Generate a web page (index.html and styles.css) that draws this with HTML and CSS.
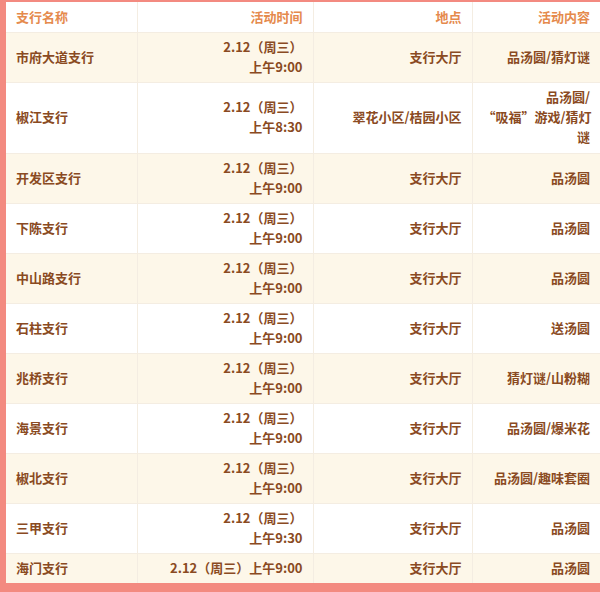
FILE: index.html
```
<!DOCTYPE html>
<html lang="zh">
<head>
<meta charset="utf-8">
<link rel="stylesheet" href="styles.css">
</head>
<body>
<div class="frame">
<table class="sched">
<colgroup><col class="c1"><col class="c2"><col class="c3"><col class="c4"></colgroup>
<thead>
<tr><th class="l">支行名称</th><th>活动时间</th><th>地点</th><th>活动内容</th></tr>
</thead>
<tbody>
<tr class="alt"><td class="l">市府大道支行</td><td>2.12（周三）<br>上午9:00</td><td>支行大厅</td><td>品汤圆/猜灯谜</td></tr>
<tr class="tall"><td class="l">椒江支行</td><td>2.12（周三）<br>上午8:30</td><td>翠花小区/桔园小区</td><td>品汤圆/<br>“吸福”游戏/猜灯<br>谜</td></tr>
<tr class="alt"><td class="l">开发区支行</td><td>2.12（周三）<br>上午9:00</td><td>支行大厅</td><td>品汤圆</td></tr>
<tr><td class="l">下陈支行</td><td>2.12（周三）<br>上午9:00</td><td>支行大厅</td><td>品汤圆</td></tr>
<tr class="alt"><td class="l">中山路支行</td><td>2.12（周三）<br>上午9:00</td><td>支行大厅</td><td>品汤圆</td></tr>
<tr><td class="l">石柱支行</td><td>2.12（周三）<br>上午9:00</td><td>支行大厅</td><td>送汤圆</td></tr>
<tr class="alt"><td class="l">兆桥支行</td><td>2.12（周三）<br>上午9:00</td><td>支行大厅</td><td>猜灯谜/山粉糊</td></tr>
<tr><td class="l">海景支行</td><td>2.12（周三）<br>上午9:00</td><td>支行大厅</td><td>品汤圆/爆米花</td></tr>
<tr class="alt"><td class="l">椒北支行</td><td>2.12（周三）<br>上午9:00</td><td>支行大厅</td><td>品汤圆/趣味套圈</td></tr>
<tr><td class="l">三甲支行</td><td>2.12（周三）<br>上午9:30</td><td>支行大厅</td><td>品汤圆</td></tr>
<tr class="alt"><td class="l">海门支行</td><td>2.12（周三）上午9:00</td><td>支行大厅</td><td>品汤圆</td></tr>
</tbody>
</table>
</div>
</body>
</html>
```
FILE: styles.css
```
html, body {
  margin: 0;
  padding: 0;
  background: #f38a80;
  height: 100%;
}
body {
  font-family: "Noto Sans CJK SC", "Noto Sans", sans-serif;
  font-size: 13px;
  font-weight: 700;
}
.frame {
  padding: 2px 0 0 6px;
}
.sched {
  width: 594px;
  border-collapse: collapse;
  table-layout: fixed;
  background: #ffffff;
}
.c1 { width: 131px; }
.c2 { width: 176px; }
.c3 { width: 159px; }
.c4 { width: 128px; }
.sched th,
.sched td {
  padding: 4px 10px 5px;
  line-height: 20px;
  height: 20px;
  text-align: right;
  vertical-align: middle;
  white-space: nowrap;
  border-bottom: 1px solid #f4ede2;
  border-left: 1px solid #f4ede2;
}
.sched th {
  padding-top: 5px;
}
.sched tr.tall td {
  padding-bottom: 6px;
}
.sched th:first-child,
.sched td:first-child {
  border-left: none;
}
.sched th {
  color: #e58a4d;
  font-weight: 700;
  background: #ffffff;
}
.sched td {
  color: #8a4a22;
}
.sched .l {
  text-align: left;
}
.sched tr.alt td {
  background: #fdf7e9;
}
.sched tbody tr:last-child td {
  border-bottom: none;
}
```
